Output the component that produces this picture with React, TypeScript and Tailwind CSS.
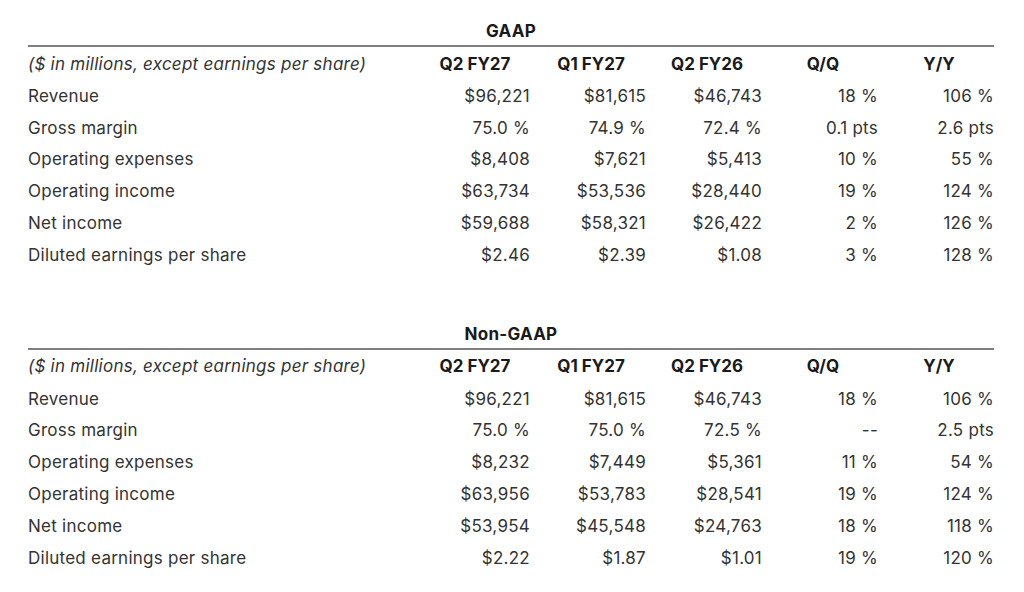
import React from 'react';

type Row = { label: string; values: string[] };

const cols = ['Q2 FY27', 'Q1 FY27', 'Q2 FY26', 'Q/Q', 'Y/Y'];

const gaap: Row[] = [
  { label: 'Revenue', values: ['$96,221', '$81,615', '$46,743', '18 %', '106 %'] },
  { label: 'Gross margin', values: ['75.0 %', '74.9 %', '72.4 %', '0.1 pts', '2.6 pts'] },
  { label: 'Operating expenses', values: ['$8,408', '$7,621', '$5,413', '10 %', '55 %'] },
  { label: 'Operating income', values: ['$63,734', '$53,536', '$28,440', '19 %', '124 %'] },
  { label: 'Net income', values: ['$59,688', '$58,321', '$26,422', '2 %', '126 %'] },
  { label: 'Diluted earnings per share', values: ['$2.46', '$2.39', '$1.08', '3 %', '128 %'] },
];

const nonGaap: Row[] = [
  { label: 'Revenue', values: ['$96,221', '$81,615', '$46,743', '18 %', '106 %'] },
  { label: 'Gross margin', values: ['75.0 %', '75.0 %', '72.5 %', '--', '2.5 pts'] },
  { label: 'Operating expenses', values: ['$8,232', '$7,449', '$5,361', '11 %', '54 %'] },
  { label: 'Operating income', values: ['$63,956', '$53,783', '$28,541', '19 %', '124 %'] },
  { label: 'Net income', values: ['$53,954', '$45,548', '$24,763', '18 %', '118 %'] },
  { label: 'Diluted earnings per share', values: ['$2.22', '$1.87', '$1.01', '19 %', '120 %'] },
];

function ResultsTable({ title, rows }: { title: string; rows: Row[] }) {
  return (
    <div className="w-[966px]">
      <div className="h-[24px] text-center font-bold leading-[24px] text-[#1a1a1a]">{title}</div>
      <div className="mt-[2px] h-[2px] bg-[#7f7f7f]" />
      <div className="flex h-[33px] items-center">
        <div className="w-[386px] italic text-[#333]">($ in millions, except earnings per share)</div>
        {cols.map((c) => (
          <div key={c} className="w-[116px] pl-[6px] text-center font-bold tracking-normal text-[#1a1a1a]">
            {c}
          </div>
        ))}
      </div>
      {rows.map((r) => (
        <div key={r.label} className="flex h-[31.8px] items-center text-[#333]">
          <div className="w-[386px]">{r.label}</div>
          {r.values.map((v, i) => (
            <div key={i} className="w-[116px] text-right">
              {v}
            </div>
          ))}
        </div>
      ))}
    </div>
  );
}

export default function App() {
  return (
    <div
      className="h-[592px] w-[1024px] bg-white pl-[28px] pt-[19px] text-[17px] leading-[24px] tracking-[0.25px]"
      style={{ fontFamily: 'Inter, "Noto Sans", sans-serif' }}
    >
      <ResultsTable title="GAAP" rows={gaap} />
      <div className="h-[51px]" />
      <ResultsTable title="Non-GAAP" rows={nonGaap} />
    </div>
  );
}
